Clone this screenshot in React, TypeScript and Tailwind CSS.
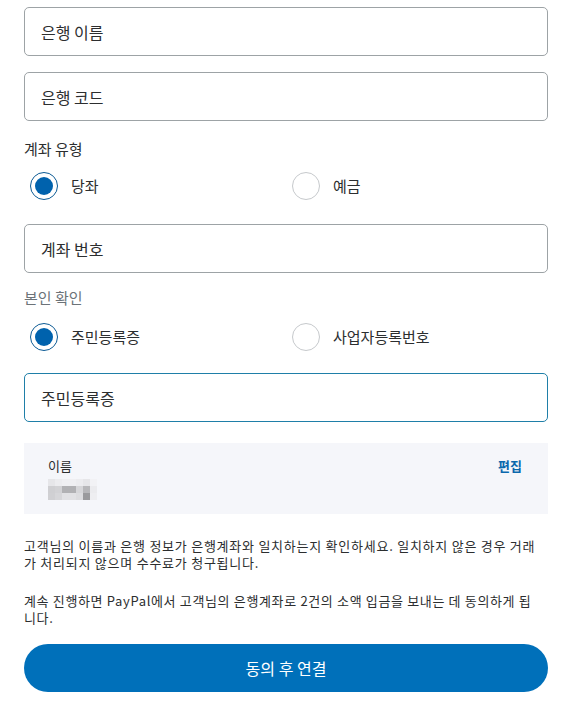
const font = "font-['Malgun_Gothic','Noto_Sans_CJK_KR','Noto_Sans',sans-serif]"

const pixels = [
  ['#e6e6e9', '#ececef', '#efeff2', '#efeff2', '#ececef', '#e6e6e9', '#f2f2f5'],
  ['#cfcfd2', '#d2d2d5', '#b1b1b4', '#b1b1b4', '#d6d6d9', '#b7b7ba', '#ebebee'],
  ['#d0d0d3', '#d6d6d9', '#e1e1e4', '#e1e1e4', '#dcdcdf', '#9a9a9d', '#eeeef1'],
]

function Field({ label, focus }: { label: string; focus?: boolean }) {
  return (
    <div
      className={`h-[49px] rounded-[5px] border flex items-center px-4 text-[16px] text-[#2c2e2f] ${
        focus ? 'border-[#1f7fa8]' : 'border-[#9da3a6]'
      }`}
    >
      {label}
    </div>
  )
}

function Radio({ label, checked }: { label: string; checked?: boolean }) {
  return (
    <div className="flex items-center gap-[13px] pl-[6px]">
      {checked ? (
        <span className="w-[28px] h-[28px] rounded-full border-[1.5px] border-[#0b5a94] flex items-center justify-center">
          <span className="w-[18px] h-[18px] rounded-full bg-[#0062ad]" />
        </span>
      ) : (
        <span className="w-[28px] h-[28px] rounded-full border border-[#c6c9cc] bg-white" />
      )}
      <span className="text-[15px] text-[#2c2e2f]">{label}</span>
    </div>
  )
}

export default function App() {
  return (
    <div className={`${font} bg-white w-[570px] h-[703px] overflow-hidden pl-6 pr-[22px] pt-[7px]`}>
      <Field label="은행 이름" />
      <div className="mt-4">
        <Field label="은행 코드" />
      </div>

      <div className="mt-[17px] text-[15px] text-[#2c2e2f] leading-[22px]">계좌 유형</div>
      <div className="grid grid-cols-2 mt-[12px]">
        <Radio label="당좌" checked />
        <Radio label="예금" />
      </div>

      <div className="mt-[24px]">
        <Field label="계좌 번호" />
      </div>

      <div className="mt-[14px] text-[15px] text-[#6c7378] leading-[22px]">본인 확인</div>
      <div className="grid grid-cols-2 mt-[14px]">
        <Radio label="주민등록증" checked />
        <Radio label="사업자등록번호" />
      </div>

      <div className="mt-[22px]">
        <Field label="주민등록증" focus />
      </div>

      <div className="mt-[21px] bg-[#f5f6fa] h-[71px] pl-6 pr-[26px] pt-[14px] flex justify-between">
        <div>
          <div className="text-[13px] text-[#2c2e2f] leading-[18px]">이름</div>
          <div className="mt-[4px] flex flex-col">
            {pixels.map((row, i) => (
              <div key={i} className="flex">
                {row.map((c, j) => (
                  <span key={j} className="w-[7px] h-[7px]" style={{ backgroundColor: c }} />
                ))}
              </div>
            ))}
          </div>
        </div>
        <div className="text-[13px] font-bold text-[#0b68ad] leading-[18px]">편집</div>
      </div>

      <div className="mt-[23px] text-[13px] leading-[17px] tracking-[0.75px] text-[#2c2e2f] whitespace-nowrap">
        <div>고객님의 이름과 은행 정보가 은행계좌와 일치하는지 확인하세요. 일치하지 않은 경우 거래</div>
        <div>가 처리되지 않으며 수수료가 청구됩니다.</div>
      </div>
      <div className="mt-[21px] text-[13px] leading-[17px] tracking-[0.65px] text-[#2c2e2f] whitespace-nowrap">
        <div>계속 진행하면 PayPal에서 고객님의 은행계좌로 2건의 소액 입금을 보내는 데 동의하게 됩</div>
        <div>니다.</div>
      </div>

      <button className="mt-[18px] w-full h-[48px] rounded-full bg-[#0070ba] text-white text-[16px] flex items-center justify-center">
        동의 후 연결
      </button>
    </div>
  )
}
